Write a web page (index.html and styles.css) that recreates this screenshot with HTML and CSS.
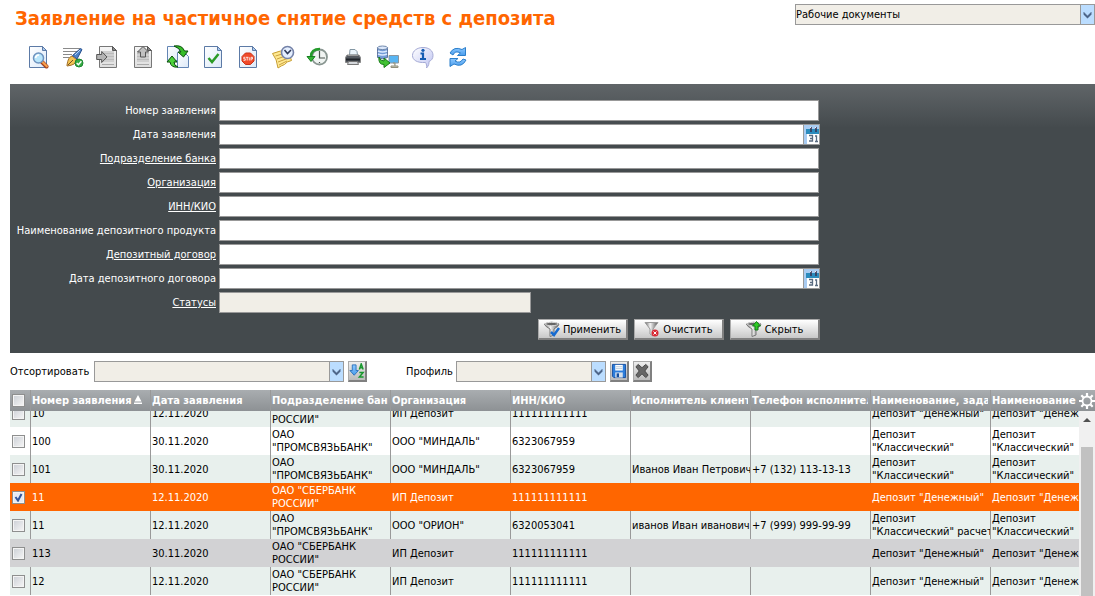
FILE: index.html
```html
<!DOCTYPE html>
<html lang="ru">
<head>
<meta charset="utf-8">
<title>Заявление на частичное снятие средств с депозита</title>
<link rel="stylesheet" href="styles.css">
</head>
<body>
<svg class="defs" aria-hidden="true">
  <defs>
    <linearGradient id="paper" x1="0" y1="0" x2="1" y2="1"><stop offset="0" stop-color="#fff"/><stop offset="1" stop-color="#dce9f8"/></linearGradient>
    <linearGradient id="greypaper" x1="0" y1="0" x2="0" y2="1"><stop offset="0" stop-color="#f6f6f6"/><stop offset="1" stop-color="#dedede"/></linearGradient>
    <linearGradient id="metal" x1="0" y1="0" x2="1" y2="0"><stop offset="0" stop-color="#666"/><stop offset=".4" stop-color="#f4f4f4"/><stop offset="1" stop-color="#555"/></linearGradient>
    <linearGradient id="blue" x1="0" y1="0" x2="0" y2="1"><stop offset="0" stop-color="#8cc8ff"/><stop offset="1" stop-color="#4a9cec"/></linearGradient>
    <linearGradient id="bubble" x1="0" y1="0" x2="1" y2="1"><stop offset="0" stop-color="#fff"/><stop offset="1" stop-color="#bfc4f2"/></linearGradient>
    <symbol id="doc" viewBox="0 0 24 24"><path d="M3.500 1.500h13l4 4v17h-17z" fill="url(#paper)" stroke="#5c7aa6"/><path d="M16.500 1.500v4h4z" fill="#a9c7ec" stroke="#5c7aa6"/></symbol>
    <symbol id="greydoc" viewBox="0 0 24 24"><path d="M3.500 1.500h13l4 4v17h-17z" fill="url(#greypaper)" stroke="#777"/><path d="M16.500 1.500v4h4z" fill="#888" stroke="#555"/><path d="M6 6h12v11H6z" fill="#cfcfcf"/><path d="M6 8.500h12M6 11.500h12M6 14.500h12" stroke="#bbb"/><path d="M6 19.500h12" stroke="#aaa"/></symbol>
    <symbol id="funnel" viewBox="0 0 16 16"><path d="M.5 3Q7.500-.5 15 3q0 2-5 5v6l-4 1.500V8Q.5 5 .5 3z" fill="url(#metal)" stroke="#777"/><ellipse cx="7.700" cy="3" rx="6.500" ry="1.700" fill="#666" stroke="#ddd"/></symbol>
    <symbol id="chevron" viewBox="0 0 14 19"><path d="M3 7l4 4 4-4v2.500l-4 4-4-4z" fill="#4a6185" stroke="#4a6185" stroke-width=".5"/></symbol>
    <symbol id="calendar" viewBox="0 0 15 19"><path d="M0 0h15v19H0z" fill="#a9ccf2"/><path d="M2 4h13v5H2z" fill="#2a8bbd"/><path d="M3 9h12v10H3z" fill="#fff"/><path d="M7 2v5M12 2v5" stroke="#38304e" stroke-width="1.500"/><path d="M6 2.500h1M11 2.500h1" stroke="#eee"/><path d="M5 10.500h3.500v3H6M8.500 13v3H5M11 11h1.500v5.500M11 16.500h3" fill="none" stroke="#596b80" stroke-width="1.300"/></symbol>
  </defs>
</svg>

<header class="top">
  <h1 class="title">Заявление на частичное снятие средств с депозита</h1>
  <span class="drop scope"><select aria-label="Область документов"><option>Рабочие документы</option></select><svg class="drop-arrow"><use href="#chevron"/></svg></span>
</header>

<nav class="toolbar" aria-label="Действия">
  <button class="tool" aria-label="Просмотр"><svg viewBox="0 0 24 24"><use href="#doc"/><path d="M16 17l4.500 4.500" stroke="#a33f1c" stroke-width="4" stroke-linecap="round"/><path d="M16.500 17l4.300 4.300" stroke="#f7a04d" stroke-width="2.200" stroke-linecap="round"/><circle cx="12.500" cy="13" r="5" fill="#b9e6fb" stroke="#6d93bf" stroke-width="1.500"/><path d="M9.500 13q.5-3 3.500-3" fill="none" stroke="#fff" stroke-width="1.600"/></svg></button>
  <button class="tool" aria-label="Подписать"><svg viewBox="0 0 24 24"><path d="M2 3.500h17M2 6.500h15M2 9.500h9M2 12.500h6" stroke="#8a8a8a"/><path d="M6 20q1-8 5-9l5 4q-1 5-10 6z" fill="#f3c352" stroke="#a2702b"/><path d="M7 20l5-5" stroke="#735124"/><path d="M11.500 10.500l8-7 1.500 1-5 9.500z" fill="#4e83c8" stroke="#284f8c"/><path d="M14 10l5-5" stroke="#b6d6fa"/><circle cx="18" cy="18" r="4" fill="#36ac43" stroke="#1d8531"/><path d="M15.700 18l1.700 1.700 3-3.400" fill="none" stroke="#fff" stroke-width="1.500"/></svg></button>
  <button class="tool" aria-label="Импорт"><svg viewBox="0 0 24 24"><use href="#greydoc"/><path d="M.7 9.500h5v-3l5.300 5.500-5.300 5.500v-3h-5z" fill="#b4b4b4" stroke="#555"/></svg></button>
  <button class="tool" aria-label="Экспорт"><svg viewBox="0 0 24 24"><use href="#greydoc"/><path d="M9.500 12V7h-3L12 1.500 17.500 7h-3v5z" fill="#c0c0c0" stroke="#555"/></svg></button>
  <button class="tool" aria-label="Заменить"><svg viewBox="0 0 24 24"><path d="M1.500 1.500h9l3 3v11h-12z" fill="url(#paper)" stroke="#6385b4"/><path d="M11.500 7.500h7l4 4v11h-11z" fill="url(#paper)" stroke="#6385b4"/><path d="M8 1q8-1.500 10.500 5H22l-4.500 6L12 7h3q-1.500-4-7-6z" fill="#36bc28" stroke="#094c0b"/><path d="M12 22q-7 1-8-5H1l5-6 5 6H8q0 4 4 5z" fill="#4cd33a" stroke="#094c0b"/></svg></button>
  <button class="tool" aria-label="Проверить"><svg viewBox="0 0 24 24"><use href="#doc"/><path d="M7.500 13l3.500 4 6.500-8" fill="none" stroke="#2b9b26" stroke-width="2.500"/></svg></button>
  <button class="tool" aria-label="Отозвать"><svg viewBox="0 0 24 24"><use href="#doc"/><path d="M9.500 8h5l3.500 3.500v4.500L14.500 19.500h-5L6 16v-4.500z" fill="#f04a2a" stroke="#c93318"/><path d="M9.300 12.300H7.800v1.500h1.500v1.500H7.500M9.900 12.300h2.600M11.200 12.300v3.200M13.300 12.300v3.200M15 15.500v-3.200h1.500V14H15" fill="none" stroke="#fff" stroke-width=".8"/></svg></button>
  <button class="tool" aria-label="Отложить"><svg viewBox="0 0 24 24"><path d="M1.500 8.500q8-4 16-2l3 9q-5 1-7 4-3 1-6.500 3.500-1-9-5.500-14.500z" fill="#ffe991" stroke="#c79d31"/><path d="M4.500 11l10-3M6 14l11-4M7 17l12-4.500M8 20l8-4" stroke="#caa040"/><circle cx="16.500" cy="7.500" r="6" fill="#e5efff" stroke="#7482a8" stroke-width="1.600"/><path d="M13.500 5l3 3.500L20 5" fill="none" stroke="#303b59" stroke-width="1.600"/></svg></button>
  <button class="tool" aria-label="История"><svg viewBox="0 0 24 24"><circle cx="13.500" cy="12" r="7.500" fill="#f0f4f2" stroke="#899691" stroke-width="1.800"/><path d="M13.500 6v7H19M13.500 17v1" fill="none" stroke="#48534d" stroke-width="1.200"/><path d="M14 4q-9 0-9 7.500" fill="none" stroke="#249a2b" stroke-width="2.500"/><path d="M1 11.500h8L5 16.500z" fill="#35b536" stroke="#178021"/></svg></button>
  <button class="tool" aria-label="Печать"><svg viewBox="0 0 24 24"><path d="M8.500 10l.5-5.500h5l2 2 .5 3.500z" fill="#eaf4fb" stroke="#8497a4"/><path d="M6 10h12l1.500 2.500v5h-15v-5z" fill="#555a61" stroke="#888"/><path d="M7 10.500h10" stroke="#999"/><path d="M5 14.500h14" stroke="#20242a" stroke-width="2"/><path d="M7.500 16.500h9l1 3h-11z" fill="#d5d8dc" stroke="#777"/></svg></button>
  <button class="tool" aria-label="Обмен с банком"><svg viewBox="0 0 24 24"><path d="M1.500 2.500v10q5 2.500 10 0v-10z" fill="#739bd7" stroke="#6076a0"/><ellipse cx="6.500" cy="2.800" rx="5" ry="1.800" fill="#dce8fb" stroke="#7189ad"/><path d="M2 6q4.500 2 9 0M2 9q4.500 2 9 0" fill="none" stroke="#dceaff" stroke-width="1.500"/><path d="M13 10.500h9.500v7.500H13z" fill="#58b5f3" stroke="#8c969e"/><path d="M17 18h2v3h-4v1.500h7V21h-3" fill="#cecebb" stroke="#918f7c"/><path d="M3 12q1 4 5 4v-3l6 5-6 4.500V19.500q-6 0-5-7.500z" fill="#41c233" stroke="#187a18"/></svg></button>
  <button class="tool" aria-label="Информация"><svg viewBox="0 0 24 24"><path d="M12 2.500c6 0 10 3 10 8 0 3-1.500 5-4 6 0 2 0 4-2.500 6.500.5-2 0-4-1-5.500C6 18 1.500 15 1.500 10.500S6 2.500 12 2.500z" fill="url(#bubble)" stroke="#a5aad5"/><path d="M9.500 8.500H12V14M9 14h6" fill="none" stroke="#155cb3" stroke-width="2.200"/><circle cx="12" cy="5.300" r="1.600" fill="#155cb3"/></svg></button>
  <button class="tool" aria-label="Обновить"><svg viewBox="0 0 24 24"><path d="M4 8q4-7 12-3.500l3.500-2v8h-8l3-2.500Q9 5 7 10z" fill="url(#blue)" stroke="#2b7fcb"/><path d="M20 15q-4 8-12 4l-4 2.500v-8h8L9 16q5 3 8-2z" fill="url(#blue)" stroke="#2b7fcb"/></svg></button>
</nav>

<form class="filter">
  <div class="fields">
    <label for="f1">Номер заявления</label><input class="field" id="f1">
    <label for="f2">Дата заявления</label><span class="date"><input class="field" id="f2"><button type="button" class="cal" aria-label="Выбрать дату заявления"><svg><use href="#calendar"/></svg></button></span>
    <label for="f3"><a href="#f3">Подразделение банка</a></label><input class="field" id="f3">
    <label for="f4"><a href="#f4">Организация</a></label><input class="field" id="f4">
    <label for="f5"><a href="#f5">ИНН/КИО</a></label><input class="field" id="f5">
    <label for="f6">Наименование депозитного продукта</label><input class="field" id="f6">
    <label for="f7"><a href="#f7">Депозитный договор</a></label><input class="field" id="f7">
    <label for="f8">Дата депозитного договора</label><span class="date"><input class="field" id="f8"><button type="button" class="cal" aria-label="Выбрать дату договора"><svg><use href="#calendar"/></svg></button></span>
    <label for="f9"><a href="#f9">Статусы</a></label><input class="field status" id="f9" readonly>
  </div>
  <div class="actions">
    <button type="button" class="push"><svg viewBox="0 0 16 16"><use href="#funnel"/><path d="M7 11l3 3 5-7" fill="none" stroke="#176bd0" stroke-width="2.500"/></svg>Применить</button>
    <button type="button" class="push"><svg viewBox="0 0 16 16"><path d="M1 1.500h13L9 8v7l-3-2V8z" fill="url(#metal)" stroke="#999"/><circle cx="11" cy="12" r="3.500" fill="#d92b36"/><path d="M9.500 10.500l3 3M12.500 10.500l-3 3" stroke="#fff"/></svg>Очистить</button>
    <button type="button" class="push"><svg viewBox="0 0 16 16"><use href="#funnel"/><path d="M9 9V5H6.500l4-4.500 4 4.500H12v4z" fill="#2ecb25" stroke="#14791a"/></svg>Скрыть</button>
  </div>
</form>

<div class="sorting">
  <label for="sort">Отсортировать</label>
  <span class="drop sort"><select id="sort"><option></option></select><svg class="drop-arrow"><use href="#chevron"/></svg></span>
  <button class="mini" aria-label="Порядок сортировки"><svg viewBox="0 0 17 17"><path d="M3.500 2h4v6H10l-4.500 5L1 8h2.500z" fill="url(#blue)" stroke="#2c72bd"/><path d="M11 7l2-6 2 6M11.500 5h3M11 10h4l-4 5h4.500" fill="none" stroke="#19982e" stroke-width="1.600"/></svg></button>
  <label class="profile-label" for="profile">Профиль</label>
  <span class="drop profile"><select id="profile"><option></option></select><svg class="drop-arrow"><use href="#chevron"/></svg></span>
  <button class="mini" aria-label="Сохранить профиль"><svg viewBox="0 0 17 17"><path d="M1.500 1.500h14v14H3l-1.500-1.500z" fill="#2c7ddb" stroke="#144d9d"/><path d="M4.500 2h8v6h-8z" fill="#fff"/><path d="M5 4h7M5 6h7" stroke="#b8c7d8"/><path d="M4.500 10h8v5.500h-8z" fill="#d7e1ec"/><path d="M6 11h2.500v4H6z" fill="#164f9d"/></svg></button>
  <button class="mini" aria-label="Удалить профиль"><svg viewBox="0 0 17 17"><path d="M2 4l2.500-2.500L8.500 5l4-3.500L15 4l-3.500 4.500L15 13l-2.500 2.500-4-4-4 4L2 13l3.500-4.500z" fill="#666" stroke="#444"/></svg></button>
</div>

<main class="grid">
  <div class="grid-view">
    <table>
      <colgroup><col class="c-check"><col span="9" class="c-data"></colgroup>
      <thead><tr>
        <th><input type="checkbox" aria-label="Выбрать все"></th><th><span class="head">Номер заявления<svg class="asc" viewBox="0 0 8 9"><path d="M4 0l3.500 6.500h-7zM0 7.500h8V9H0z" fill="#fff"/></svg></span></th><th><span class="head">Дата заявления</span></th><th><span class="head">Подразделение банка</span></th><th><span class="head">Организация</span></th><th><span class="head">ИНН/КИО</span></th><th><span class="head">Исполнитель клиента</span></th><th><span class="head">Телефон исполнителя</span></th><th><span class="head">Наименование, зада</span></th><th><span class="head">Наименование</span></th>
      </tr></thead>
      <tbody>
        <tr class="cut"><td><div><span><input type="checkbox" aria-label="Выбрать 10"></span></div></td><td><div><span>10</span></div></td><td><div><span>12.11.2020</span></div></td><td><div><span><b>ОАО "СБЕРБАНК</b><b>РОССИИ"</b></span></div></td><td><div><span>ИП Депозит</span></div></td><td><div><span>111111111111</span></div></td><td></td><td></td><td><div><span>Депозит "Денежный"</span></div></td><td><div><span>Депозит "Денежный"</span></div></td></tr>
        <tr class="plain"><td><input type="checkbox" aria-label="Выбрать 100"></td><td>100</td><td>30.11.2020</td><td>ОАО<br>"ПРОМСВЯЗЬБАНК"</td><td>ООО "МИНДАЛЬ"</td><td>6323067959</td><td></td><td></td><td>Депозит<br>"Классический"</td><td>Депозит<br>"Классический"</td></tr>
        <tr><td><input type="checkbox" aria-label="Выбрать 101"></td><td>101</td><td>30.11.2020</td><td>ОАО<br>"ПРОМСВЯЗЬБАНК"</td><td>ООО "МИНДАЛЬ"</td><td>6323067959</td><td>Иванов Иван Петрович</td><td>+7 (132) 113-13-13</td><td>Депозит<br>"Классический"</td><td>Депозит<br>"Классический"</td></tr>
        <tr class="selected"><td><input type="checkbox" aria-label="Выбрать 11" checked></td><td>11</td><td>12.11.2020</td><td>ОАО "СБЕРБАНК<br>РОССИИ"</td><td>ИП Депозит</td><td>111111111111</td><td></td><td></td><td>Депозит "Денежный"</td><td>Депозит "Денежный"</td></tr>
        <tr><td><input type="checkbox" aria-label="Выбрать 11"></td><td>11</td><td>12.11.2020</td><td>ОАО<br>"ПРОМСВЯЗЬБАНК"</td><td>ООО "ОРИОН"</td><td>6320053041</td><td>иванов Иван иванович</td><td>+7 (999) 999-99-99</td><td>Депозит<br>"Классический" расчет</td><td>Депозит<br>"Классический"</td></tr>
        <tr class="hovered"><td><input type="checkbox" aria-label="Выбрать 113"></td><td>113</td><td>30.11.2020</td><td>ОАО "СБЕРБАНК<br>РОССИИ"</td><td>ИП Депозит</td><td>111111111111</td><td></td><td></td><td>Депозит "Денежный"</td><td>Депозит "Денежный"</td></tr>
        <tr><td><input type="checkbox" aria-label="Выбрать 12"></td><td>12</td><td>12.11.2020</td><td>ОАО "СБЕРБАНК<br>РОССИИ"</td><td>ИП Депозит</td><td>111111111111</td><td></td><td></td><td>Депозит "Денежный"</td><td>Депозит "Денежный"</td></tr>
      </tbody>
    </table>
  </div>
  <div class="side">
    <button class="gear" aria-label="Настройка столбцов"><svg viewBox="0 0 16 16"><circle cx="8" cy="8" r="4.500" fill="none" stroke="#fff" stroke-width="1.800"/><path d="M8 0v3M8 13v3M0 8h3M13 8h3M2.300 2.300l2.200 2.200M11.500 11.500l2.200 2.200M13.700 2.300l-2.200 2.200M4.500 11.500l-2.200 2.200" stroke="#fff" stroke-width="2.200"/></svg></button>
    <div class="bar"><svg class="up" viewBox="0 0 8 4"><path d="M4 0l4 4H0z" fill="#505050"/></svg><div class="thumb"></div></div>
  </div>
</main>
</body>
</html>
```
FILE: styles.css
```css
* { box-sizing: border-box; }

body {
  margin: 0;
  height: 100vh;
  display: flex;
  flex-direction: column;
  overflow: hidden;
  background: #fff;
  color: #000;
  font: 11px/13px "DejaVu Sans Condensed", "DejaVu Sans", sans-serif;
}

button, input, select { font: inherit; color: inherit; margin: 0; padding: 0; border-radius: 0; }
button { display: flex; align-items: center; justify-content: center; }
svg { display: block; flex: none; }
.defs { position: absolute; width: 0; height: 0; }

.top { display: flex; justify-content: space-between; align-items: flex-start; padding: 4px 0 0 15px; height: 45px; }
.title { margin: 0; color: #ff6600; font-size: 20px; line-height: 28px; font-weight: bold; white-space: nowrap; }

.drop { position: relative; display: block; height: 21px; }
.drop select { appearance: none; display: block; width: 100%; height: 100%; border: 1px solid #999; background: #f1eee7; outline: none; }
.drop-arrow { position: absolute; top: 1px; right: 1px; width: 14px; height: 19px; border-left: 1px solid #999; background: #bbddff; pointer-events: none; }
.scope { width: 300px; }
.sort { width: 250px; }
.profile { width: 150px; }

.toolbar { display: flex; gap: 11px; padding: 0 0 15px 26px; }
.tool { width: 24px; height: 24px; border: 0; background: none; }
.tool svg { width: 24px; height: 24px; }

.filter { margin-left: 10px; padding: 16px 0 13px; color: #fff; background: #444a4d linear-gradient(#606568, #444a4d) no-repeat 0 0 / 100% 44px; }
.fields { display: grid; grid-template-columns: 206px 601px; column-gap: 3px; row-gap: 3px; align-items: center; }
.fields label { text-align: right; white-space: nowrap; }
.fields a { color: inherit; text-decoration: underline; }
.field { width: 600px; height: 21px; border: 1px solid #999; background: #fff; color: #000; }
.date { display: flex; }
.date .field { flex: 1; width: auto; }
.cal { width: 17px; height: 21px; margin-left: -1px; border: 1px solid #999; background: #a9ccf2; }
.cal svg { width: 15px; height: 19px; }
.status { width: 312px; background: #f1eee7; }

.actions { display: flex; justify-content: flex-end; gap: 6px; width: 810px; margin-top: 6px; }
.push { width: 90px; height: 21px; gap: 3px; border: 1px solid; border-color: #aaa #808080 #808080 #aaa; border-right-width: 2px; border-bottom-width: 2px; background: linear-gradient(#fff, #c8c8c8); color: #000; }
.push svg { width: 16px; height: 16px; }

.sorting { display: flex; align-items: center; gap: 4px; padding: 8px 0 8px 10px; }
.sorting label { flex: none; width: 80px; }
.sorting .profile-label { width: 46px; margin-left: 35px; }
.mini { width: 19px; height: 21px; border: 1px solid; border-color: #aaa #808080 #808080 #aaa; border-right-width: 2px; border-bottom-width: 2px; background: linear-gradient(#eee, #bbb); }
.mini svg { width: 16px; height: 16px; }

.grid { display: flex; flex: 1; min-height: 0; margin-left: 10px; }
.grid-view { flex: 1; min-width: 0; overflow: hidden; }
table { width: 100%; min-width: 1100px; table-layout: fixed; border-collapse: separate; border-spacing: 0; }
.c-check { width: 20px; }
.c-data { width: 120px; }
th, td { padding: 0 0 0 2px; overflow: hidden; white-space: nowrap; text-align: left; vertical-align: middle; }
th + th, td + td { border-left: 1px solid #999; padding-left: 1px; }
th { height: 21px; color: #fff; font-weight: bold; background: linear-gradient(#a9adb0, #8d9194); }
td { height: 28px; background: #e8f0ed; }
.plain td { background: #fff; }
.selected td { background: #ff6600; border-color: #ff6600; color: #fff; }
.hovered td { background: #d2d2d4; border-color: #d2d2d4; }
.head { display: block; margin-right: 2px; overflow: hidden; }
.asc { display: inline-block; width: 8px; height: 9px; margin-left: 2px; }

.cut td { height: 16px; }
.cut div { display: flex; align-items: flex-end; height: 16px; overflow: hidden; }
.cut span { flex: none; display: flex; flex-direction: column; justify-content: center; height: 28px; }
.cut b { font-weight: normal; }

input[type="checkbox"] { appearance: none; display: block; width: 13px; height: 13px; border: 1px solid #8e8f8f; background: linear-gradient(135deg, #cbcfd5, #f6f6f6); box-shadow: inset 0 0 0 1px #f4f4f4; }
input[type="checkbox"]:checked { background: url("data:image/svg+xml,%3Csvg xmlns='http://www.w3.org/2000/svg' viewBox='0 0 11 11'%3E%3Cpath d='M2.500 5l2.500 3.500L8.500 2' fill='none' stroke='%2331549b' stroke-width='2'/%3E%3C/svg%3E") center / 11px, #e6eaf2; }

.side { display: flex; flex-direction: column; width: 16px; }
.gear { height: 21px; border: 0; background: linear-gradient(#a9adb0, #8d9194); }
.gear svg { width: 16px; height: 16px; }
.bar { flex: 1; display: flex; flex-direction: column; align-items: center; padding-top: 7px; background: #f0f0f0; }
.up { width: 8px; height: 4px; }
.thumb { flex: 1; width: 12px; margin-top: 25px; background: #c1c1c1; }
```
